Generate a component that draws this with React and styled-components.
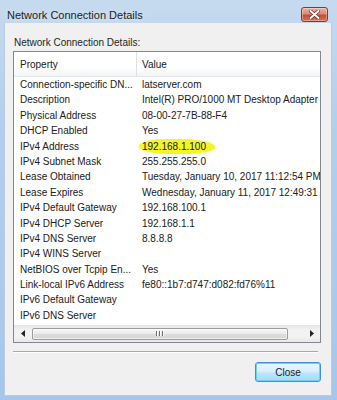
import styled, { createGlobalStyle } from 'styled-components';

const GlobalStyle = createGlobalStyle`
  html, body {
    margin: 0;
    padding: 0;
    background: #a9c8ea;
  }
  * {
    box-sizing: border-box;
  }
`;

const rows = [
  ['Connection-specific DN...', 'latserver.com'],
  ['Description', 'Intel(R) PRO/1000 MT Desktop Adapter'],
  ['Physical Address', '08-00-27-7B-88-F4'],
  ['DHCP Enabled', 'Yes'],
  ['IPv4 Address', '192.168.1.100', true],
  ['IPv4 Subnet Mask', '255.255.255.0'],
  ['Lease Obtained', 'Tuesday, January 10, 2017 11:12:54 PM'],
  ['Lease Expires', 'Wednesday, January 11, 2017 12:49:31 AM'],
  ['IPv4 Default Gateway', '192.168.100.1'],
  ['IPv4 DHCP Server', '192.168.1.1'],
  ['IPv4 DNS Server', '8.8.8.8'],
  ['IPv4 WINS Server', ''],
  ['NetBIOS over Tcpip En...', 'Yes'],
  ['Link-local IPv6 Address', 'fe80::1b7:d747:d082:fd76%11'],
  ['IPv6 Default Gateway', ''],
  ['IPv6 DNS Server', ''],
];

const Window = styled.div`
  width: 337px;
  height: 400px;
  display: flex;
  flex-direction: column;
  background: linear-gradient(180deg, #c6daef 0%, #b4cfec 30%, #a6c6ea 100%);
  font-family: 'Liberation Sans', Arial, sans-serif;
  overflow: hidden;
`;

const TitleBar = styled.div`
  height: 23px;
  flex-shrink: 0;
  display: flex;
  align-items: center;
  justify-content: space-between;
  padding: 6px 9px 0 7px;
`;

const Title = styled.div`
  font-size: 11px;
  color: #1c1c1c;
  text-shadow: 0 0 6px rgba(255, 255, 255, 0.7);
`;

const CloseX = styled.div`
  width: 27px;
  height: 15px;
  border: 1px solid #84382c;
  border-radius: 3px;
  background: linear-gradient(180deg, #eab0a2 0%, #dd8a76 45%, #c84b34 55%, #d9705a 100%);
  box-shadow: inset 0 0 0 1px rgba(255, 255, 255, 0.35);
  display: flex;
  align-items: center;
  justify-content: center;
`;

const Body = styled.div`
  flex: 1;
  margin: 0 5px 4px 4px;
  background: #f0f0f0;
  border: 1px solid #b9cbe0;
  border-top: none;
  display: flex;
  flex-direction: column;
  padding: 13px 10px 0 8px;
`;

const Label = styled.div`
  font-size: 10px;
  line-height: 13px;
  color: #1e1e1e;
  margin-left: 1px;
`;

const ListBox = styled.div`
  margin-top: 2px;
  height: 292px;
  border: 1px solid #828790;
  background: #fff;
  display: flex;
  flex-direction: column;
  overflow: hidden;
`;

const Grid = styled.div`
  display: grid;
  grid-template-columns: 123px 1fr;
  height: ${(p) => p.$h}px;
  align-items: center;
  font-size: 10px;
  color: #202020;
  white-space: nowrap;
`;

const HeaderRow = styled(Grid)`
  background: linear-gradient(180deg, #ffffff 0%, #ffffff 60%, #f4f5f7 100%);
  border-bottom: 1px solid #e3e6ea;
  align-items: stretch;
`;

const HeadCell = styled.div`
  display: flex;
  align-items: center;
  padding-left: ${(p) => p.$pad}px;
  border-right: ${(p) => (p.$divider ? '1px solid #dde1e6' : 'none')};
`;

const Rows = styled.div`
  flex: 1;
`;

const Cell = styled.div`
  padding-left: ${(p) => p.$pad}px;
  overflow: hidden;
  line-height: 15.4px;
`;

const Marker = styled.span`
  display: inline-block;
  background: #f3f42a;
  border-radius: 40% 50% 45% 50% / 50% 55% 45% 50%;
  padding: 0 9px 0 3px;
  margin: 0 -9px 0 -3px;
  line-height: 15px;
  box-shadow: 0 0 1.5px 0.5px #f6f65a;
`;

const ScrollBar = styled.div`
  height: 17px;
  flex-shrink: 0;
  display: flex;
  align-items: center;
  background: linear-gradient(180deg, #e6e6e6 0%, #f2f2f2 30%, #f2f2f2 70%, #e8e8e8 100%);
`;

const Arrow = styled.div`
  width: 17px;
  height: 17px;
  flex-shrink: 0;
  display: flex;
  align-items: center;
  justify-content: center;
`;

const Track = styled.div`
  flex: 1;
  display: flex;
  align-items: center;
  padding-right: 15px;
`;

const Thumb = styled.div`
  width: 256px;
  height: 12px;
  margin-left: 1px;
  border: 1px solid #9b9b9b;
  border-radius: 2px;
  background: linear-gradient(180deg, #f6f6f6 0%, #ececec 45%, #dcdcdc 55%, #d6d6d6 100%);
  box-shadow: inset 0 0 0 1px rgba(255, 255, 255, 0.6);
  display: flex;
  align-items: center;
  justify-content: center;
  gap: 1px;
`;

const Grip = styled.span`
  width: 1px;
  height: 5px;
  background: #6e6e6e;
  box-shadow: 1px 0 0 #fafafa;
  margin-right: 1px;
`;

const Separator = styled.div`
  margin: 8px 3px 0 0;
  height: 2px;
  border-top: 1px solid #a9a9a9;
  border-bottom: 1px solid #ffffff;
`;

const Footer = styled.div`
  display: flex;
  justify-content: flex-end;
  padding-top: 9px;
`;

const Button = styled.button`
  width: 66px;
  height: 20px;
  padding: 0;
  border: 1px solid #3c92d8;
  border-radius: 3px;
  background: linear-gradient(180deg, #eaf6fd 0%, #d9f0fc 45%, #bee6fd 55%, #a7d9f5 100%);
  box-shadow: inset 0 0 0 1px #6ed0f7;
  font-family: 'Liberation Sans', Arial, sans-serif;
  font-size: 10px;
  color: #1a1a1a;
`;

const ArrowIcon = ({ dir }) => (
  <svg width="4" height="7" viewBox="0 0 4 7">
    <polygon points={dir === 'left' ? '4,0 0,3.5 4,7' : '0,0 4,3.5 0,7'} fill="#222" />
  </svg>
);

const App = () => {
  return (
    <>
      <GlobalStyle />
      <Window>
        <TitleBar>
          <Title>Network Connection Details</Title>
          <CloseX>
            <svg width="11" height="9" viewBox="0 0 11 9">
              <path d="M1.5 1 L9.5 8 M9.5 1 L1.5 8" stroke="#6b2a20" strokeWidth="3.4" strokeLinecap="round" />
              <path d="M1.5 1 L9.5 8 M9.5 1 L1.5 8" stroke="#ffffff" strokeWidth="2" strokeLinecap="round" />
            </svg>
          </CloseX>
        </TitleBar>
        <Body>
          <Label>Network Connection Details:</Label>
          <ListBox>
            <HeaderRow $h={25}>
              <HeadCell $pad={6} $divider>Property</HeadCell>
              <HeadCell $pad={5}>Value</HeadCell>
            </HeaderRow>
            <Rows>
              {rows.map(([prop, value, marked]) => (
                <Grid key={prop} $h={15.4}>
                  <Cell $pad={6}>{prop}</Cell>
                  <Cell $pad={5}>{marked ? <Marker>{value}</Marker> : value}</Cell>
                </Grid>
              ))}
            </Rows>
            <ScrollBar>
              <Arrow>
                <ArrowIcon dir="left" />
              </Arrow>
              <Track>
                <Thumb>
                  <Grip />
                  <Grip />
                  <Grip />
                </Thumb>
              </Track>
              <Arrow>
                <ArrowIcon dir="right" />
              </Arrow>
            </ScrollBar>
          </ListBox>
          <Separator />
          <Footer>
            <Button>Close</Button>
          </Footer>
        </Body>
      </Window>
    </>
  );
};

export default App;
